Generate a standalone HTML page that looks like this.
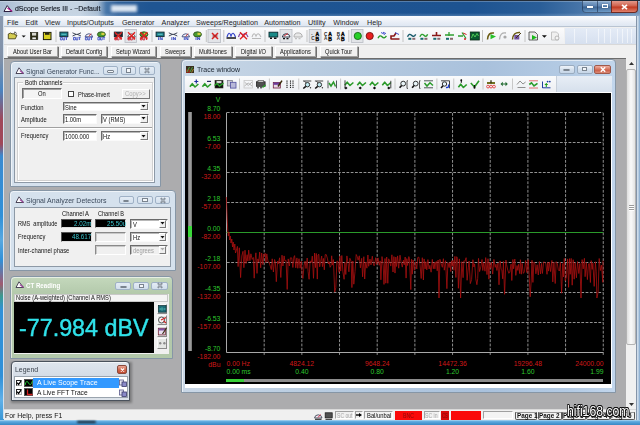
<!DOCTYPE html><html><head><meta charset="utf-8"><style>
html,body{margin:0;padding:0;}body{width:640px;height:425px;position:relative;overflow:hidden;background:#3a86c8;font-family:"Liberation Sans", sans-serif;}
div{box-sizing:border-box;}
</style></head><body>
<div style="position:absolute;left:0px;top:0px;width:640px;height:17px;background:linear-gradient(90deg,#a8bcd2 0px,#c4d2e0 30px,#c6d4e2 80px,#a9bdd2 98px,#4a78aa 106px,#2a5c96 118px,#1f5592 150px,#1d5391 470px,#2a5e98 540px,#5580b0 600px,#7898bc 640px);"></div>
<div style="position:absolute;left:0px;top:13px;width:640px;height:4px;background:linear-gradient(rgba(255,255,255,0),rgba(200,220,240,0.35));"></div>
<div style="position:absolute;left:0px;top:0px;width:640px;height:1px;background:#222c38;"></div>
<div style="position:absolute;left:0px;top:1px;width:640px;height:1px;background:rgba(255,255,255,0.25);"></div>
<div style="position:absolute;left:111px;top:5px;width:26px;height:7px;background:#dce6f2;filter:blur(1.5px);"></div>
<div style="position:absolute;left:15.20px;top:4.90px;font-size:7.6px;line-height:7.6px;color:#141a24;white-space:nowrap;transform:scaleX(0.9168);transform-origin:0 0;-webkit-text-stroke:0.15px #141a24;">dScope Series III - ~Default</div>
<div style="position:absolute;left:581.5px;top:1px;width:16.5px;height:11.5px;background:linear-gradient(rgba(200,220,240,0.45),rgba(120,150,190,0.35) 45%,rgba(30,60,100,0.35) 55%,rgba(140,190,230,0.4));border:1px solid rgba(30,50,80,0.6);border-top:none;border-radius:0 0 0 4px;"></div>
<div style="position:absolute;left:597.5px;top:1px;width:14px;height:11.5px;background:linear-gradient(rgba(200,220,240,0.45),rgba(120,150,190,0.35) 45%,rgba(30,60,100,0.35) 55%,rgba(140,190,230,0.4));border:1px solid rgba(30,50,80,0.6);border-top:none;border-left:none;"></div>
<div style="position:absolute;left:611px;top:1px;width:26.5px;height:11.5px;background:linear-gradient(#e39a8c,#d0614c 45%,#c03a22 55%,#e0806a);border:1px solid #6e2a22;border-top:none;border-radius:0 0 4px 0;"></div>
<div style="position:absolute;left:586.8px;top:6px;width:6px;height:2px;background:#fff;box-shadow:0 0 1px #223;"></div>
<div style="position:absolute;left:602px;top:4.2px;width:5.5px;height:4.3px;border:1px solid #fff;border-top-width:1.6px;box-shadow:0 0 1px #223;"></div>
<svg style="position:absolute;left:621px;top:3.5px" width="7" height="6" viewBox="0 0 7 6"><path d="M1 0.8 L6 5.2 M6 0.8 L1 5.2" stroke="#fff" stroke-width="1.6"/></svg>
<div style="position:absolute;left:0px;top:16px;width:4px;height:409px;background:linear-gradient(#8a9ab0 0px,#8090a8 44px,#4a84c0 74px,#a04858 104px,#a04858 128px,#3a8ad0 140px,#3090d8 200px,#58a8e0 224px,#3090d8 244px,#a05a70 268px,#3a9a90 280px,#3090d8 294px,#3090d8 360px,#60b0e8 384px,#3090d0 409px);"></div>
<div style="position:absolute;left:2.5px;top:16px;width:1px;height:403px;background:#d4e0ec;"></div>
<div style="position:absolute;left:3.5px;top:16px;width:0.8px;height:393px;background:#8494a8;"></div>
<div style="position:absolute;left:636px;top:16px;width:4px;height:409px;background:linear-gradient(90deg,#8494a8 0.8px,#d4e0ec 0.8px,#c9d8e8 2px,#7fa6cc);"></div>
<div style="position:absolute;left:4px;top:16px;width:632px;height:11px;background:linear-gradient(#fbfcfe,#e9eef6 60%,#dfe7f2);border-bottom:1px solid #b9c4d2;"></div>
<div style="position:absolute;left:7.00px;top:18.50px;font-size:7.2px;line-height:7.2px;color:#1e1e1e;white-space:nowrap;">File</div>
<div style="position:absolute;left:25.40px;top:18.50px;font-size:7.2px;line-height:7.2px;color:#1e1e1e;white-space:nowrap;">Edit</div>
<div style="position:absolute;left:44.70px;top:18.50px;font-size:7.2px;line-height:7.2px;color:#1e1e1e;white-space:nowrap;">View</div>
<div style="position:absolute;left:67.00px;top:18.50px;font-size:7.2px;line-height:7.2px;color:#1e1e1e;white-space:nowrap;">Inputs/Outputs</div>
<div style="position:absolute;left:122.00px;top:18.50px;font-size:7.2px;line-height:7.2px;color:#1e1e1e;white-space:nowrap;">Generator</div>
<div style="position:absolute;left:161.60px;top:18.50px;font-size:7.2px;line-height:7.2px;color:#1e1e1e;white-space:nowrap;">Analyzer</div>
<div style="position:absolute;left:196.00px;top:18.50px;font-size:7.2px;line-height:7.2px;color:#1e1e1e;white-space:nowrap;">Sweeps/Regulation</div>
<div style="position:absolute;left:264.20px;top:18.50px;font-size:7.2px;line-height:7.2px;color:#1e1e1e;white-space:nowrap;">Automation</div>
<div style="position:absolute;left:308.00px;top:18.50px;font-size:7.2px;line-height:7.2px;color:#1e1e1e;white-space:nowrap;">Utility</div>
<div style="position:absolute;left:333.20px;top:18.50px;font-size:7.2px;line-height:7.2px;color:#1e1e1e;white-space:nowrap;">Window</div>
<div style="position:absolute;left:367.00px;top:18.50px;font-size:7.2px;line-height:7.2px;color:#1e1e1e;white-space:nowrap;">Help</div>
<div style="position:absolute;left:4px;top:27px;width:632px;height:17px;background:#f0f0f0;"></div>
<div style="position:absolute;left:6px;top:28px;width:558px;height:16px;background:linear-gradient(#fbfbfc,#eef0f3);"></div>
<div style="position:absolute;left:565px;top:28px;width:71px;height:16px;background:linear-gradient(#e4ebf6,#d6e0ef);"></div>
<div style="position:absolute;left:574px;top:29px;width:0.8px;height:14px;background:rgba(255,255,255,0.55);"></div>
<div style="position:absolute;left:586px;top:29px;width:0.8px;height:14px;background:rgba(255,255,255,0.55);"></div>
<div style="position:absolute;left:598px;top:29px;width:0.8px;height:14px;background:rgba(255,255,255,0.55);"></div>
<div style="position:absolute;left:604px;top:29px;width:0.8px;height:14px;background:rgba(255,255,255,0.55);"></div>
<div style="position:absolute;left:610px;top:29px;width:0.8px;height:14px;background:rgba(255,255,255,0.55);"></div>
<div style="position:absolute;left:617px;top:29px;width:0.8px;height:14px;background:rgba(255,255,255,0.55);"></div>
<div style="position:absolute;left:622px;top:29px;width:0.8px;height:14px;background:rgba(255,255,255,0.55);"></div>
<div style="position:absolute;left:627px;top:29px;width:0.8px;height:14px;background:rgba(255,255,255,0.55);"></div>
<div style="position:absolute;left:631px;top:29px;width:0.8px;height:14px;background:rgba(255,255,255,0.55);"></div>
<div style="position:absolute;left:4px;top:44px;width:632px;height:14px;background:#f0f0f0;border-top:1px solid #d8d8d8;"></div>
<div style="position:absolute;left:7px;top:46.4px;width:50.5px;height:10.2px;background:#f0f0f0;border:1px solid;border-color:#fff #a0a0a0 #a0a0a0 #fff;box-shadow:0.8px 0.8px 0 #505050;"></div>
<div style="position:absolute;left:12.68px;top:49.05px;font-size:6.6px;line-height:6.6px;color:#111;white-space:nowrap;transform:scaleX(0.8650);transform-origin:0 0;">About User Bar</div>
<div style="position:absolute;left:61px;top:46.4px;width:45.5px;height:10.2px;background:#f0f0f0;border:1px solid;border-color:#fff #a0a0a0 #a0a0a0 #fff;box-shadow:0.8px 0.8px 0 #505050;"></div>
<div style="position:absolute;left:65.61px;top:49.05px;font-size:6.6px;line-height:6.6px;color:#111;white-space:nowrap;transform:scaleX(0.8650);transform-origin:0 0;">Default Config</div>
<div style="position:absolute;left:111px;top:46.4px;width:44.5px;height:10.2px;background:#f0f0f0;border:1px solid;border-color:#fff #a0a0a0 #a0a0a0 #fff;box-shadow:0.8px 0.8px 0 #505050;"></div>
<div style="position:absolute;left:116.07px;top:49.05px;font-size:6.6px;line-height:6.6px;color:#111;white-space:nowrap;transform:scaleX(0.8650);transform-origin:0 0;">Setup Wizard</div>
<div style="position:absolute;left:160px;top:46.4px;width:30.5px;height:10.2px;background:#f0f0f0;border:1px solid;border-color:#fff #a0a0a0 #a0a0a0 #fff;box-shadow:0.8px 0.8px 0 #505050;"></div>
<div style="position:absolute;left:165.04px;top:49.05px;font-size:6.6px;line-height:6.6px;color:#111;white-space:nowrap;transform:scaleX(0.8650);transform-origin:0 0;">Sweeps</div>
<div style="position:absolute;left:194px;top:46.4px;width:37.5px;height:10.2px;background:#f0f0f0;border:1px solid;border-color:#fff #a0a0a0 #a0a0a0 #fff;box-shadow:0.8px 0.8px 0 #505050;"></div>
<div style="position:absolute;left:198.74px;top:49.05px;font-size:6.6px;line-height:6.6px;color:#111;white-space:nowrap;transform:scaleX(0.8650);transform-origin:0 0;">Multi-tones</div>
<div style="position:absolute;left:235px;top:46.4px;width:37.10000000000002px;height:10.2px;background:#f0f0f0;border:1px solid;border-color:#fff #a0a0a0 #a0a0a0 #fff;box-shadow:0.8px 0.8px 0 #505050;"></div>
<div style="position:absolute;left:240.97px;top:49.05px;font-size:6.6px;line-height:6.6px;color:#111;white-space:nowrap;transform:scaleX(0.8650);transform-origin:0 0;">Digital I/O</div>
<div style="position:absolute;left:274.7px;top:46.4px;width:41.30000000000001px;height:10.2px;background:#f0f0f0;border:1px solid;border-color:#fff #a0a0a0 #a0a0a0 #fff;box-shadow:0.8px 0.8px 0 #505050;"></div>
<div style="position:absolute;left:279.91px;top:49.05px;font-size:6.6px;line-height:6.6px;color:#111;white-space:nowrap;transform:scaleX(0.8650);transform-origin:0 0;">Applications</div>
<div style="position:absolute;left:319.7px;top:46.4px;width:38.30000000000001px;height:10.2px;background:#f0f0f0;border:1px solid;border-color:#fff #a0a0a0 #a0a0a0 #fff;box-shadow:0.8px 0.8px 0 #505050;"></div>
<div style="position:absolute;left:325.21px;top:49.05px;font-size:6.6px;line-height:6.6px;color:#111;white-space:nowrap;transform:scaleX(0.8650);transform-origin:0 0;">Quick Tour</div>
<div style="position:absolute;left:4px;top:58px;width:632px;height:351px;background:#acacae;border-top:1px solid #6d6d6d;"></div>
<div style="position:absolute;left:626px;top:58px;width:10px;height:351px;background:#f0f0f0;"></div>
<div style="position:absolute;left:626px;top:69px;width:10px;height:276px;background:linear-gradient(90deg,#dedede,#fafafa 50%,#e2e2e2);border:1px solid #b3b3b3;border-radius:2px;"></div>
<div style="position:absolute;left:629px;top:204.5px;width:4.5px;height:1px;background:#9a9a9a;box-shadow:0 1px 0 #fff;"></div>
<div style="position:absolute;left:629px;top:206.5px;width:4.5px;height:1px;background:#9a9a9a;box-shadow:0 1px 0 #fff;"></div>
<div style="position:absolute;left:629px;top:208.5px;width:4.5px;height:1px;background:#9a9a9a;box-shadow:0 1px 0 #fff;"></div>
<svg style="position:absolute;left:629px;top:62px" width="5" height="3" viewBox="0 0 5 3"><path d="M0 3 L5 3 L2.5 0 Z" fill="#333"/></svg>
<svg style="position:absolute;left:629px;top:402.5px" width="5" height="3" viewBox="0 0 5 3"><path d="M0 0 L5 0 L2.5 3 Z" fill="#333"/></svg>
<div style="position:absolute;left:4px;top:409px;width:632px;height:11px;background:#f0f0f0;border-top:1px solid #d9d9d9;"></div>
<div style="position:absolute;left:4.60px;top:412.00px;font-size:7.2px;line-height:7.2px;color:#111;white-space:nowrap;transform:scaleX(0.9628);transform-origin:0 0;">For Help, press F1</div>
<div style="position:absolute;left:0px;top:419.6px;width:640px;height:5.4px;background:linear-gradient(#b0d8f2,#62ace0 1.5px,#4a9ad4 3px,#3a88c4);"></div>
<div style="position:absolute;left:77px;top:421px;width:19px;height:2px;background:#101820;filter:blur(0.8px);border-radius:1px;"></div>
<svg style="position:absolute;left:314px;top:411.5px" width="20" height="8" viewBox="0 0 20 8"><path d="M0.5 6 A3.8 3.8 0 0 1 8 6 Z" fill="#f0e8f0" stroke="#404858" stroke-width="0.9"/><path d="M4 5.5 L6.5 2.5" stroke="#d02040" stroke-width="0.9"/><path d="M1 7.3 h6.5" stroke="#202020" stroke-width="1"/><rect x="11.2" y="0.8" width="7" height="5" fill="#505050" stroke="#202020" stroke-width="0.8"/><path d="M11.5 7.3 h6.5" stroke="#202020" stroke-width="1"/></svg>
<div style="position:absolute;left:334.6px;top:411px;width:19px;height:8.4px;border:1px solid;border-color:#a0a0a0 #fff #fff #a0a0a0;"></div>
<div style="position:absolute;left:337.00px;top:412.75px;font-size:6.6px;line-height:6.6px;color:#a8a8a8;white-space:nowrap;transform:scaleX(0.7682);transform-origin:0 0;">SC out</div>
<div style="position:absolute;left:355px;top:411px;width:7.5px;height:8.4px;border:1px solid;border-color:#a0a0a0 #fff #fff #a0a0a0;"></div>
<svg style="position:absolute;left:356px;top:413.3px" width="6" height="4" viewBox="0 0 6 4"><path d="M0 2 H3.5" stroke="#000" stroke-width="1.4"/><path d="M3 0 L6 2 L3 4 Z" fill="#000"/></svg>
<div style="position:absolute;left:363.9px;top:411px;width:29.5px;height:8.4px;border:1px solid;border-color:#a0a0a0 #fff #fff #a0a0a0;"></div>
<div style="position:absolute;left:366.90px;top:412.75px;font-size:6.6px;line-height:6.6px;color:#111;white-space:nowrap;transform:scaleX(0.8829);transform-origin:0 0;">Bal/unbal</div>
<div style="position:absolute;left:395px;top:411.4px;width:27.2px;height:8.4px;background:#fa0a0a;"></div>
<div style="position:absolute;left:403.10px;top:412.85px;font-size:6.6px;line-height:6.6px;color:#8a0a0a;white-space:nowrap;transform:scaleX(0.7894);transform-origin:0 0;">BNC</div>
<div style="position:absolute;left:423.7px;top:411px;width:16.4px;height:8.4px;border:1px solid;border-color:#a0a0a0 #fff #fff #a0a0a0;"></div>
<div style="position:absolute;left:425.20px;top:412.75px;font-size:6.6px;line-height:6.6px;color:#a8a8a8;white-space:nowrap;transform:scaleX(0.7745);transform-origin:0 0;">SC in</div>
<div style="position:absolute;left:441.1px;top:411.4px;width:8px;height:8.4px;background:#d80c0c;"></div>
<div style="position:absolute;left:442.10px;top:412.85px;font-size:6.6px;line-height:6.6px;color:#7a0a0a;white-space:nowrap;transform:scaleX(0.6544);transform-origin:0 0;">CS</div>
<div style="position:absolute;left:450.9px;top:411.4px;width:30.4px;height:8.4px;background:#fa0a0a;"></div>
<div style="position:absolute;left:482.8px;top:411px;width:30.5px;height:8.4px;border:1px solid;border-color:#a0a0a0 #fff #fff #a0a0a0;background:#f4f4f4;"></div>
<div style="position:absolute;left:515.3px;top:412.2px;width:22.200000000000045px;height:7.4px;background:#f2f2f2;border:1px solid #555;border-top-color:#999;border-radius:0 0 2px 2px;"></div>
<div style="position:absolute;left:516.70px;top:413.35px;font-size:6.8px;line-height:6.8px;color:#111;white-space:nowrap;font-weight:bold;transform:scaleX(0.9350);transform-origin:0 0;">Page 1</div>
<div style="position:absolute;left:537.5px;top:412.2px;width:24.200000000000045px;height:7.4px;background:#f2f2f2;border:1px solid #555;border-top-color:#999;border-radius:0 0 2px 2px;"></div>
<div style="position:absolute;left:538.90px;top:413.35px;font-size:6.8px;line-height:6.8px;color:#111;white-space:nowrap;font-weight:bold;transform:scaleX(0.9350);transform-origin:0 0;">Page 2</div>
<div style="position:absolute;left:561.7px;top:412.2px;width:24.299999999999955px;height:7.4px;background:#f2f2f2;border:1px solid #555;border-top-color:#999;border-radius:0 0 2px 2px;"></div>
<div style="position:absolute;left:563.10px;top:413.35px;font-size:6.8px;line-height:6.8px;color:#111;white-space:nowrap;font-weight:bold;transform:scaleX(0.9350);transform-origin:0 0;">Page 3</div>
<div style="position:absolute;left:586px;top:412.2px;width:24px;height:7.4px;background:#f2f2f2;border:1px solid #555;border-top-color:#999;border-radius:0 0 2px 2px;"></div>
<div style="position:absolute;left:587.40px;top:413.35px;font-size:6.8px;line-height:6.8px;color:#111;white-space:nowrap;font-weight:bold;transform:scaleX(0.9350);transform-origin:0 0;">Page 4</div>
<div style="position:absolute;left:610px;top:412.2px;width:25px;height:7.4px;background:#f2f2f2;border:1px solid #555;border-top-color:#999;border-radius:0 0 2px 2px;"></div>
<div style="position:absolute;left:611.40px;top:413.35px;font-size:6.8px;line-height:6.8px;color:#111;white-space:nowrap;font-weight:bold;transform:scaleX(0.9350);transform-origin:0 0;">Page 5</div>
<div style="position:absolute;left:566.7px;top:404.3px;font-size:14px;line-height:14px;color:#fff;white-space:nowrap;transform:scaleX(0.8730);transform-origin:0 0;text-shadow:0.7px 0.7px 0 #111,-0.6px -0.6px 0 #111,0.6px -0.6px 0 #111,-0.6px 0.6px 0 #111,0 0.8px 0 #111,0.8px 0 0 #111,0 -0.8px 0 #111,-0.8px 0 0 #111;">hifi168.com</div>
<div style="position:absolute;left:10px;top:61.2px;width:150.5px;height:126.3px;background:#d5e1ed;border:1px solid #8696a6;border-radius:4px 4px 0 0;box-shadow:inset 1px 1px 0 rgba(255,255,255,0.6);"></div>
<div style="position:absolute;left:26.30px;top:67.50px;font-size:7.6px;line-height:7.6px;color:#3c4a5c;white-space:nowrap;transform:scaleX(0.8901);transform-origin:0 0;">Signal Generator Func...</div>
<svg style="position:absolute;left:15.3px;top:67.3px" width="9" height="7" viewBox="0 0 9 7"><path d="M1 6.5 L4 0.8 L8.5 6.5 Z" fill="#fff" stroke="#3a3448" stroke-width="0.9"/><path d="M4.8 3.6 L8.3 6.2" stroke="#9a3a9a" stroke-width="1.1"/></svg>
<div style="position:absolute;left:102.7px;top:66.3px;width:15.799999999999997px;height:8.700000000000003px;background:linear-gradient(#e4ecf5,#d2dfec);border:1px solid #9fb1c6;border-radius:2px;"></div>
<div style="position:absolute;left:107.39999999999999px;top:70.45px;width:6.4px;height:2.4px;border:0.8px solid #7a848f;background:#f4f7fa;border-radius:1px;"></div>
<div style="position:absolute;left:120.7px;top:66.3px;width:15.299999999999997px;height:8.700000000000003px;background:linear-gradient(#e4ecf5,#d2dfec);border:1px solid #9fb1c6;border-radius:2px;"></div>
<div style="position:absolute;left:125.75px;top:68.45px;width:5.2px;height:4.4px;border:0.8px solid #7a848f;border-top-width:1.6px;background:#f4f7fa;"></div>
<div style="position:absolute;left:138.8px;top:66.3px;width:15.799999999999983px;height:8.700000000000003px;background:linear-gradient(#e4ecf5,#d2dfec);border:1px solid #9fb1c6;border-radius:2px;"></div>
<svg style="position:absolute;left:142.7px;top:67.15px" width="8" height="7" viewBox="0 0 8 7"><path d="M1.8 1.2 L6.2 5.8 M6.2 1.2 L1.8 5.8" stroke="#7a848f" stroke-width="1.9"/><path d="M2.2 1.6 L5.8 5.4 M5.8 1.6 L2.2 5.4" stroke="#e8eef4" stroke-width="0.5"/></svg>
<div style="position:absolute;left:14px;top:77px;width:141px;height:106px;background:#f0f0f0;border:1px solid #8d99a6;"></div>
<div style="position:absolute;left:17px;top:82px;width:136px;height:99px;border:1px solid #d0d0d0;box-shadow:inset 1px 1px 0 #fff,1px 1px 0 #fff;"></div>
<div style="position:absolute;left:23px;top:79px;width:40px;height:7px;background:#f0f0f0;"></div>
<div style="position:absolute;left:24.90px;top:79.75px;font-size:6.6px;line-height:6.6px;color:#111;white-space:nowrap;transform:scaleX(0.8941);transform-origin:0 0;">Both channels</div>
<div style="position:absolute;left:22px;top:88px;width:40px;height:10.5px;background:#f4f4f4;border:1px solid;border-color:#6e6e6e #fff #fff #6e6e6e;box-shadow:inset 1px 1px 0 #a0a0a0;"></div>
<div style="position:absolute;left:38.03px;top:90.85px;font-size:6.6px;line-height:6.6px;color:#111;white-space:nowrap;transform:scaleX(0.8800);transform-origin:0 0;">On</div>
<div style="position:absolute;left:67.8px;top:91.1px;width:6.3px;height:6px;background:#fff;border:1px solid #444;"></div>
<div style="position:absolute;left:77.80px;top:91.55px;font-size:6.6px;line-height:6.6px;color:#111;white-space:nowrap;transform:scaleX(0.8609);transform-origin:0 0;">Phase-invert</div>
<div style="position:absolute;left:121.6px;top:88.5px;width:28.9px;height:10px;background:#efefef;border:1px solid;border-color:#fff #777 #777 #fff;"></div>
<div style="position:absolute;left:125.30px;top:91.45px;font-size:6.6px;line-height:6.6px;color:#b0b0b0;white-space:nowrap;transform:scaleX(0.8955);transform-origin:0 0;">Copy&gt;&gt;</div>
<div style="position:absolute;left:21.40px;top:104.65px;font-size:6.6px;line-height:6.6px;color:#111;white-space:nowrap;transform:scaleX(0.8928);transform-origin:0 0;">Function</div>
<div style="position:absolute;left:21.40px;top:116.85px;font-size:6.6px;line-height:6.6px;color:#111;white-space:nowrap;transform:scaleX(0.8800);transform-origin:0 0;">Amplitude</div>
<div style="position:absolute;left:21.40px;top:133.45px;font-size:6.6px;line-height:6.6px;color:#111;white-space:nowrap;transform:scaleX(0.8800);transform-origin:0 0;">Frequency</div>
<div style="position:absolute;left:62.5px;top:101.6px;width:86.30000000000001px;height:9.800000000000011px;background:#fff;border:1px solid;border-color:#6a6a6a #fafafa #fafafa #6a6a6a;box-shadow:inset 1px 1px 0 #b8b8b8;"></div>
<div style="position:absolute;left:140.3px;top:102.8px;width:7.3px;height:7.400000000000011px;background:#efefef;border:1px solid;border-color:#fff #7a7a7a #7a7a7a #fff;"></div>
<svg style="position:absolute;left:141.3px;top:105.0px" width="5" height="3" viewBox="0 0 5 3"><path d="M0.5 0 L4.5 0 L2.5 2.5 Z" fill="#111"/></svg>
<div style="position:absolute;left:64.70px;top:104.55px;font-size:6.6px;line-height:6.6px;color:#111;white-space:nowrap;transform:scaleX(0.8800);transform-origin:0 0;">Sine</div>
<div style="position:absolute;left:62.5px;top:113.8px;width:34.7px;height:10.100000000000009px;background:#fff;border:1px solid;border-color:#6a6a6a #fafafa #fafafa #6a6a6a;box-shadow:inset 1px 1px 0 #b8b8b8;"></div>
<div style="position:absolute;left:64.70px;top:116.60px;font-size:6.6px;line-height:6.6px;color:#111;white-space:nowrap;transform:scaleX(0.8800);transform-origin:0 0;">1.00m</div>
<div style="position:absolute;left:101.1px;top:113.8px;width:47.70000000000002px;height:10.100000000000009px;background:#fff;border:1px solid;border-color:#6a6a6a #fafafa #fafafa #6a6a6a;box-shadow:inset 1px 1px 0 #b8b8b8;"></div>
<div style="position:absolute;left:140.3px;top:115.0px;width:7.3px;height:7.700000000000008px;background:#efefef;border:1px solid;border-color:#fff #7a7a7a #7a7a7a #fff;"></div>
<svg style="position:absolute;left:141.3px;top:117.35px" width="5" height="3" viewBox="0 0 5 3"><path d="M0.5 0 L4.5 0 L2.5 2.5 Z" fill="#111"/></svg>
<div style="position:absolute;left:103.30px;top:116.90px;font-size:6.6px;line-height:6.6px;color:#111;white-space:nowrap;transform:scaleX(0.8800);transform-origin:0 0;">V (RMS)</div>
<div style="position:absolute;left:18px;top:127px;width:134px;height:2px;border-top:1px solid #a0a0a0;border-bottom:1px solid #fff;"></div>
<div style="position:absolute;left:62.5px;top:131px;width:34.7px;height:10.099999999999994px;background:#fff;border:1px solid;border-color:#6a6a6a #fafafa #fafafa #6a6a6a;box-shadow:inset 1px 1px 0 #b8b8b8;"></div>
<div style="position:absolute;left:64.70px;top:133.80px;font-size:6.6px;line-height:6.6px;color:#111;white-space:nowrap;transform:scaleX(0.8800);transform-origin:0 0;">1000.000</div>
<div style="position:absolute;left:101.1px;top:131px;width:47.70000000000002px;height:10.099999999999994px;background:#fff;border:1px solid;border-color:#6a6a6a #fafafa #fafafa #6a6a6a;box-shadow:inset 1px 1px 0 #b8b8b8;"></div>
<div style="position:absolute;left:140.3px;top:132.2px;width:7.3px;height:7.699999999999994px;background:#efefef;border:1px solid;border-color:#fff #7a7a7a #7a7a7a #fff;"></div>
<svg style="position:absolute;left:141.3px;top:134.55px" width="5" height="3" viewBox="0 0 5 3"><path d="M0.5 0 L4.5 0 L2.5 2.5 Z" fill="#111"/></svg>
<div style="position:absolute;left:103.30px;top:134.10px;font-size:6.6px;line-height:6.6px;color:#111;white-space:nowrap;transform:scaleX(0.8800);transform-origin:0 0;">Hz</div>
<div style="position:absolute;left:9.2px;top:190.2px;width:167.3px;height:80.80000000000001px;background:#d5e1ed;border:1px solid #8696a6;border-radius:4px 4px 0 0;box-shadow:inset 1px 1px 0 rgba(255,255,255,0.6);"></div>
<div style="position:absolute;left:26.00px;top:196.50px;font-size:7.6px;line-height:7.6px;color:#3c4a5c;white-space:nowrap;transform:scaleX(0.9250);transform-origin:0 0;">Signal Analyzer Detectors</div>
<svg style="position:absolute;left:15px;top:196.3px" width="9" height="7" viewBox="0 0 9 7"><path d="M1 6.5 L4 0.8 L8.5 6.5 Z" fill="#fff" stroke="#3a3448" stroke-width="0.9"/><path d="M4.8 3.6 L8.3 6.2" stroke="#9a3a9a" stroke-width="1.1"/></svg>
<div style="position:absolute;left:118.6px;top:195.8px;width:15.400000000000006px;height:8.399999999999977px;background:linear-gradient(#e4ecf5,#d2dfec);border:1px solid #9fb1c6;border-radius:2px;"></div>
<div style="position:absolute;left:123.1px;top:199.8px;width:6.4px;height:2.4px;border:0.8px solid #7a848f;background:#f4f7fa;border-radius:1px;"></div>
<div style="position:absolute;left:137px;top:195.8px;width:16px;height:8.399999999999977px;background:linear-gradient(#e4ecf5,#d2dfec);border:1px solid #9fb1c6;border-radius:2px;"></div>
<div style="position:absolute;left:142.4px;top:197.8px;width:5.2px;height:4.4px;border:0.8px solid #7a848f;border-top-width:1.6px;background:#f4f7fa;"></div>
<div style="position:absolute;left:155.2px;top:195.8px;width:15.300000000000011px;height:8.399999999999977px;background:linear-gradient(#e4ecf5,#d2dfec);border:1px solid #9fb1c6;border-radius:2px;"></div>
<svg style="position:absolute;left:158.85px;top:196.5px" width="8" height="7" viewBox="0 0 8 7"><path d="M1.8 1.2 L6.2 5.8 M6.2 1.2 L1.8 5.8" stroke="#7a848f" stroke-width="1.9"/><path d="M2.2 1.6 L5.8 5.4 M5.8 1.6 L2.2 5.4" stroke="#e8eef4" stroke-width="0.5"/></svg>
<div style="position:absolute;left:14px;top:207px;width:157px;height:60px;background:#f0f0f0;border:1px solid #8d99a6;"></div>
<div style="position:absolute;left:62.00px;top:210.65px;font-size:6.6px;line-height:6.6px;color:#111;white-space:nowrap;transform:scaleX(0.8865);transform-origin:0 0;">Channel A</div>
<div style="position:absolute;left:98.00px;top:210.65px;font-size:6.6px;line-height:6.6px;color:#111;white-space:nowrap;transform:scaleX(0.8435);transform-origin:0 0;">Channel B</div>
<div style="position:absolute;left:17.60px;top:221.25px;font-size:6.6px;line-height:6.6px;color:#111;white-space:nowrap;transform:scaleX(0.8391);transform-origin:0 0;">RMS&nbsp; amplitude</div>
<div style="position:absolute;left:17.60px;top:234.25px;font-size:6.6px;line-height:6.6px;color:#111;white-space:nowrap;transform:scaleX(0.8800);transform-origin:0 0;">Frequency</div>
<div style="position:absolute;left:17.60px;top:247.85px;font-size:6.6px;line-height:6.6px;color:#111;white-space:nowrap;transform:scaleX(0.8810);transform-origin:0 0;">Inter-channel phase</div>
<div style="position:absolute;left:60.5px;top:219px;width:31.299999999999997px;height:9.300000000000011px;background:#000;border:1px solid;border-color:#555 #ddd #ddd #555;"></div>
<div style="position:absolute;left:61.0px;top:219.5px;width:30.299999999999997px;height:8.300000000000011px;overflow:hidden;"><div style="position:absolute;left:13.21px;top:1.50px;font-size:6.8px;line-height:6.8px;color:#3cc4cc;white-space:nowrap;transform:scaleX(0.92);transform-origin:0 0;">2.02m</div></div>
<div style="position:absolute;left:95.2px;top:219px;width:31.299999999999997px;height:9.300000000000011px;background:#000;border:1px solid;border-color:#555 #ddd #ddd #555;"></div>
<div style="position:absolute;left:95.7px;top:219.5px;width:30.299999999999997px;height:8.300000000000011px;overflow:hidden;"><div style="position:absolute;left:11.46px;top:1.50px;font-size:6.8px;line-height:6.8px;color:#3cc4cc;white-space:nowrap;transform:scaleX(0.92);transform-origin:0 0;">25.50u</div></div>
<div style="position:absolute;left:130.3px;top:218.6px;width:37.39999999999998px;height:10.400000000000006px;background:#fff;border:1px solid;border-color:#6a6a6a #fafafa #fafafa #6a6a6a;box-shadow:inset 1px 1px 0 #b8b8b8;"></div>
<div style="position:absolute;left:159.2px;top:219.79999999999998px;width:7.3px;height:8.000000000000005px;background:#efefef;border:1px solid;border-color:#fff #7a7a7a #7a7a7a #fff;"></div>
<svg style="position:absolute;left:160.2px;top:222.3px" width="5" height="3" viewBox="0 0 5 3"><path d="M0.5 0 L4.5 0 L2.5 2.5 Z" fill="#111"/></svg>
<div style="position:absolute;left:132.50px;top:221.85px;font-size:6.6px;line-height:6.6px;color:#111;white-space:nowrap;transform:scaleX(0.8800);transform-origin:0 0;">V</div>
<div style="position:absolute;left:60.5px;top:232px;width:31.299999999999997px;height:9.5px;background:#000;border:1px solid;border-color:#555 #ddd #ddd #555;"></div>
<div style="position:absolute;left:61.0px;top:232.5px;width:30.299999999999997px;height:8.5px;overflow:hidden;"><div style="position:absolute;left:11.46px;top:1.60px;font-size:6.8px;line-height:6.8px;color:#3cc4cc;white-space:nowrap;transform:scaleX(0.92);transform-origin:0 0;">48.617</div></div>
<div style="position:absolute;left:95.2px;top:232px;width:31.299999999999997px;height:10px;background:#f0f0f0;border:1px solid;border-color:#8a8a8a #fff #fff #8a8a8a;box-shadow:inset 1px 1px 0 #c8c8c8;"></div>
<div style="position:absolute;left:130.3px;top:232px;width:37.39999999999998px;height:10px;background:#fff;border:1px solid;border-color:#6a6a6a #fafafa #fafafa #6a6a6a;box-shadow:inset 1px 1px 0 #b8b8b8;"></div>
<div style="position:absolute;left:159.2px;top:233.2px;width:7.3px;height:7.6px;background:#efefef;border:1px solid;border-color:#fff #7a7a7a #7a7a7a #fff;"></div>
<svg style="position:absolute;left:160.2px;top:235.5px" width="5" height="3" viewBox="0 0 5 3"><path d="M0.5 0 L4.5 0 L2.5 2.5 Z" fill="#111"/></svg>
<div style="position:absolute;left:132.50px;top:235.05px;font-size:6.6px;line-height:6.6px;color:#111;white-space:nowrap;transform:scaleX(0.8800);transform-origin:0 0;">Hz</div>
<div style="position:absolute;left:95.2px;top:244.7px;width:31.299999999999997px;height:10.100000000000023px;background:#f0f0f0;border:1px solid;border-color:#8a8a8a #fff #fff #8a8a8a;box-shadow:inset 1px 1px 0 #c8c8c8;"></div>
<div style="position:absolute;left:130.3px;top:244.7px;width:37.39999999999998px;height:10.100000000000023px;background:#f0f0f0;border:1px solid;border-color:#6a6a6a #fafafa #fafafa #6a6a6a;box-shadow:inset 1px 1px 0 #b8b8b8;"></div>
<div style="position:absolute;left:159.2px;top:245.89999999999998px;width:7.3px;height:7.700000000000022px;background:#efefef;border:1px solid;border-color:#fff #7a7a7a #7a7a7a #fff;"></div>
<svg style="position:absolute;left:160.2px;top:248.25px" width="5" height="3" viewBox="0 0 5 3"><path d="M0.5 0 L4.5 0 L2.5 2.5 Z" fill="#aaa"/></svg>
<div style="position:absolute;left:132.50px;top:247.80px;font-size:6.6px;line-height:6.6px;color:#a0a0a0;white-space:nowrap;transform:scaleX(0.8800);transform-origin:0 0;">degrees</div>
<div style="position:absolute;left:9.6px;top:275.6px;width:163.20000000000002px;height:83.0px;background:linear-gradient(#c4d8bc,#b4caac 20%,#b2c8aa);border:1px solid #8696a6;border-radius:4px 4px 0 0;box-shadow:inset 1px 1px 0 rgba(255,255,255,0.6);"></div>
<div style="position:absolute;left:25.80px;top:281.50px;font-size:7.6px;line-height:7.6px;color:#ffffff;white-space:nowrap;font-weight:bold;transform:scaleX(0.8100);transform-origin:0 0;">CT Reading</div>
<svg style="position:absolute;left:14.8px;top:281.3px" width="9" height="7" viewBox="0 0 9 7"><path d="M1 6.5 L4 0.8 L8.5 6.5 Z" fill="#fff" stroke="#3a3448" stroke-width="0.9"/><path d="M4.8 3.6 L8.3 6.2" stroke="#9a3a9a" stroke-width="1.1"/></svg>
<div style="position:absolute;left:115.4px;top:281.6px;width:15.900000000000006px;height:8.399999999999977px;background:linear-gradient(#e4ecf5,#d2dfec);border:1px solid #9fb1c6;border-radius:2px;"></div>
<div style="position:absolute;left:120.15px;top:285.6px;width:6.4px;height:2.4px;border:0.8px solid #7a848f;background:#f4f7fa;border-radius:1px;"></div>
<div style="position:absolute;left:133.4px;top:281.6px;width:15.900000000000006px;height:8.399999999999977px;background:linear-gradient(#e4ecf5,#d2dfec);border:1px solid #9fb1c6;border-radius:2px;"></div>
<div style="position:absolute;left:138.75000000000003px;top:283.6px;width:5.2px;height:4.4px;border:0.8px solid #7a848f;border-top-width:1.6px;background:#f4f7fa;"></div>
<div style="position:absolute;left:151.4px;top:281.6px;width:16.19999999999999px;height:8.399999999999977px;background:linear-gradient(#e4ecf5,#d2dfec);border:1px solid #9fb1c6;border-radius:2px;"></div>
<svg style="position:absolute;left:155.5px;top:282.3px" width="8" height="7" viewBox="0 0 8 7"><path d="M1.8 1.2 L6.2 5.8 M6.2 1.2 L1.8 5.8" stroke="#7a848f" stroke-width="1.9"/><path d="M2.2 1.6 L5.8 5.4 M5.8 1.6 L2.2 5.4" stroke="#e8eef4" stroke-width="0.5"/></svg>
<div style="position:absolute;left:13.8px;top:293.7px;width:154.8px;height:60.3px;background:#f0f0f0;"></div>
<div style="position:absolute;left:13.8px;top:293.7px;width:154.2px;height:8.1px;background:#f4f4f4;border:1px solid #c8c8c8;"></div>
<div style="position:absolute;left:15.50px;top:295.15px;font-size:6.6px;line-height:6.6px;color:#111;white-space:nowrap;transform:scaleX(0.8710);transform-origin:0 0;">Noise (A-weighted) (Channel A RMS)</div>
<div style="position:absolute;left:13.8px;top:301.8px;width:140.3px;height:51.1px;background:#000;"></div>
<div style="position:absolute;left:18.80px;top:316.15px;font-size:24.1px;line-height:24.1px;color:#30e2ea;white-space:nowrap;transform:scaleX(0.9665);transform-origin:0 0;-webkit-text-stroke:0.45px #30e2ea;">-77.984 dBV</div>
<div style="position:absolute;left:156.7px;top:304.2px;width:10.8px;height:9.400000000000034px;background:#e4e6e4;border:1px solid;border-color:#fafafa #8a8a8a #8a8a8a #fafafa;"></div>
<div style="position:absolute;left:156.7px;top:314.8px;width:10.8px;height:10.0px;background:#e4e6e4;border:1px solid;border-color:#fafafa #8a8a8a #8a8a8a #fafafa;"></div>
<div style="position:absolute;left:156.7px;top:326.4px;width:10.8px;height:10.400000000000034px;background:#e4e6e4;border:1px solid;border-color:#fafafa #8a8a8a #8a8a8a #fafafa;"></div>
<div style="position:absolute;left:156.7px;top:338px;width:10.8px;height:10.800000000000011px;background:#e4e6e4;border:1px solid;border-color:#fafafa #8a8a8a #8a8a8a #fafafa;"></div>
<svg style="position:absolute;left:0;top:0" width="640" height="425" viewBox="0 0 640 425"><rect x="158.3" y="305.6" width="7.8" height="6.6" fill="#1a6a74" stroke="#0a2a30" stroke-width="0.7"/><path d="M159.5 309 h1.5 M162 307.5 v3 M163.5 309 h2" stroke="#8fe" stroke-width="0.6"/><circle cx="161.5" cy="320" r="3" fill="#f4f4f4" stroke="#303030" stroke-width="0.8"/><path d="M161 320 L166 317.5 M163.5 321 L166 323" stroke="#d02020" stroke-width="1.1"/><rect x="158.3" y="328.3" width="7" height="6.6" fill="#e8e0f0" stroke="#702030" stroke-width="0.8"/><rect x="158.5" y="328.5" width="6.6" height="2" fill="#8050a0"/><path d="M162.5 334 L166.5 328" stroke="#3a2a10" stroke-width="1.2"/><circle cx="160.2" cy="343.2" r="1.2" fill="#8a8a8a"/><circle cx="164.4" cy="343.2" r="1.2" fill="#8a8a8a"/></svg>
<div style="position:absolute;left:11.3px;top:362.4px;width:120.5px;height:40.3px;background:rgba(0,0,0,0.28);filter:blur(1px);"></div>
<div style="position:absolute;left:10.5px;top:361.4px;width:119.80000000000001px;height:40.10000000000002px;background:linear-gradient(#dfe6ee,#d4dce6 40%,#dde3ea);border:1px solid #4a525c;border-radius:4px 4px 0 0;box-shadow:inset 1px 1px 0 rgba(255,255,255,0.6);"></div>
<div style="position:absolute;left:14.80px;top:365.80px;font-size:7.6px;line-height:7.6px;color:#3a424c;white-space:nowrap;transform:scaleX(0.9148);transform-origin:0 0;">Legend</div>
<div style="position:absolute;left:117.4px;top:364.9px;width:9.4px;height:9.1px;background:linear-gradient(#eaa898,#d0684e 50%,#c24a30);border:1px solid #8a4a3c;border-radius:2px;"></div>
<svg style="position:absolute;left:119.8px;top:367.5px" width="5" height="4" viewBox="0 0 5 4"><path d="M0.8 0.5 L4.2 3.5 M4.2 0.5 L0.8 3.5" stroke="#fff" stroke-width="1.1"/></svg>
<div style="position:absolute;left:14px;top:376.4px;width:113.7px;height:21.2px;background:#fff;border:1px solid #9aa4ae;"></div>
<div style="position:absolute;left:33.2px;top:378px;width:85.4px;height:9.6px;background:#3399ff;"></div>
<div style="position:absolute;left:16.1px;top:379.5px;width:5.6px;height:6.3px;background:#fff;border:1px solid #222;border-right-color:#aaa;border-bottom-color:#aaa;"></div>
<svg style="position:absolute;left:16.1px;top:379.5px" width="6" height="6" viewBox="0 0 6 6"><path d="M1.2 2.8 L2.6 4.4 L5 1.2" stroke="#000" stroke-width="1.3" fill="none"/></svg>
<div style="position:absolute;left:23.8px;top:378.6px;width:9.5px;height:8.2px;background:#000;border:0.5px solid #555;"></div>
<svg style="position:absolute;left:23.8px;top:378.6px" width="10" height="8" viewBox="0 0 10 8"><path d="M1 6 Q2.5 0 4.5 4 T8.5 2" stroke="#20c030" stroke-width="1" fill="none"/></svg>
<div style="position:absolute;left:36.60px;top:379.00px;font-size:7.6px;line-height:7.6px;color:#fff;white-space:nowrap;transform:scaleX(0.9254);transform-origin:0 0;">A Live Scope Trace</div>
<svg style="position:absolute;left:119.3px;top:379.0px" width="8" height="8" viewBox="0 0 8 8"><rect x="0.5" y="1" width="4" height="5" fill="#e8e8f4" stroke="#5a5a8a" stroke-width="0.8"/><rect x="3" y="3" width="4.5" height="4.5" fill="#8a8ac8" stroke="#3a3a6a" stroke-width="0.8"/></svg>
<div style="position:absolute;left:16.1px;top:389.0px;width:5.6px;height:6.3px;background:#fff;border:1px solid #222;border-right-color:#aaa;border-bottom-color:#aaa;"></div>
<svg style="position:absolute;left:16.1px;top:389.0px" width="6" height="6" viewBox="0 0 6 6"><path d="M1.2 2.8 L2.6 4.4 L5 1.2" stroke="#000" stroke-width="1.3" fill="none"/></svg>
<div style="position:absolute;left:23.8px;top:388.1px;width:9.5px;height:8.2px;background:#000;border:0.5px solid #555;"></div>
<svg style="position:absolute;left:23.8px;top:388.1px" width="10" height="8" viewBox="0 0 10 8"><path d="M3.5 1.5 V6.5 H8.5" stroke="#d02020" stroke-width="1.3" fill="none"/></svg>
<div style="position:absolute;left:36.60px;top:388.50px;font-size:7.6px;line-height:7.6px;color:#111;white-space:nowrap;transform:scaleX(0.8783);transform-origin:0 0;">A Live FFT Trace</div>
<svg style="position:absolute;left:119.3px;top:388.5px" width="8" height="8" viewBox="0 0 8 8"><rect x="0.5" y="1" width="4" height="5" fill="#e8e8f4" stroke="#5a5a8a" stroke-width="0.8"/><rect x="3" y="3" width="4.5" height="4.5" fill="#8a8ac8" stroke="#3a3a6a" stroke-width="0.8"/></svg>
<div style="position:absolute;left:180.5px;top:59px;width:435.70000000000005px;height:333.6px;background:linear-gradient(90deg,#c9d7e6,#b9cce0 30%,#a9c1dc 70%,#b4cbe4 90%,#c2d6ec);border:1px solid #8696a6;border-radius:4px 4px 0 0;box-shadow:inset 1px 1px 0 rgba(255,255,255,0.6);"></div>
<div style="position:absolute;left:196.80px;top:65.80px;font-size:7.6px;line-height:7.6px;color:#1b2530;white-space:nowrap;transform:scaleX(0.9227);transform-origin:0 0;">Trace window</div>
<div style="position:absolute;left:558.5px;top:65px;width:16.299999999999955px;height:8.5px;background:linear-gradient(#eef3f9,#d4e0ed 50%,#c6d6e8);border:1px solid #9aacc0;border-radius:2px;"></div>
<div style="position:absolute;left:563.4499999999999px;top:69.05px;width:6.4px;height:2.4px;border:0.8px solid #7a848f;background:#f4f7fa;border-radius:1px;"></div>
<div style="position:absolute;left:576.5px;top:65px;width:16.0px;height:8.5px;background:linear-gradient(#eef3f9,#d4e0ed 50%,#c6d6e8);border:1px solid #9aacc0;border-radius:2px;"></div>
<div style="position:absolute;left:581.9px;top:67.05px;width:5.2px;height:4.4px;border:0.8px solid #7a848f;border-top-width:1.6px;background:#f4f7fa;"></div>
<div style="position:absolute;left:594px;top:65px;width:17px;height:8.5px;background:linear-gradient(#eeb0a2,#d4705a 50%,#c85a44 55%,#dc8a76);border:1px solid #a05a4c;border-radius:2px;"></div>
<svg style="position:absolute;left:598.5px;top:65.75px" width="8" height="7" viewBox="0 0 8 7"><path d="M1.8 1.2 L6.2 5.8 M6.2 1.2 L1.8 5.8" stroke="#fff" stroke-width="1.4"/></svg>
<div style="position:absolute;left:184.8px;top:75.6px;width:427.7px;height:312.6px;background:#fff;"></div>
<div style="position:absolute;left:184.8px;top:75.6px;width:371.5px;height:16.3px;background:linear-gradient(#fafbfc,#eceef2);"></div>
<div style="position:absolute;left:556.3px;top:75.6px;width:56.2px;height:16.3px;background:linear-gradient(#e8eef6,#d6e0ec);border-left:1px solid #c8d0da;"></div>
<div style="position:absolute;left:184.8px;top:92.6px;width:426px;height:291.9px;background:#000;"></div>
<svg style="position:absolute;left:0;top:0" width="640" height="100" viewBox="0 0 640 100"><path d="M189.9 86.7 L192.26 83.7 L195.02 87.0 L198.39999999999998 84.0" stroke="#2a9a2a" stroke-width="1.6" fill="none" stroke-linejoin="round"/><path d="M194.3 81.5 h4 M196.3 79.6 v3.8" stroke="#2030a0" stroke-width="1.2"/><path d="M202.4 86.7 L204.76 83.7 L207.52 87.0 L210.89999999999998 84.0" stroke="#2a9a2a" stroke-width="1.6" fill="none" stroke-linejoin="round"/><path d="M207 81.4 h4" stroke="#2a2a60" stroke-width="1.2"/><rect x="215" y="80.4" width="8" height="7.6" fill="#101010" stroke="#303020" stroke-width="0.6"/><rect x="216.5" y="81" width="5" height="2.3" fill="#d8d8d8"/><path d="M214.5 85.5 L217 83.5 L219.5 86 L223.5 83.2" stroke="#2aa02a" stroke-width="1.5" fill="none"/><rect x="227.3" y="80.5" width="5" height="5.5" fill="#d0d0d8" stroke="#707080" stroke-width="0.7"/><rect x="230.5" y="82.3" width="5.5" height="5.8" fill="#b8b8d8" stroke="#5050a0" stroke-width="0.8"/><line x1="239.5" y1="78.5" x2="239.5" y2="89.5" stroke="#c8c8c8" stroke-width="1"/><rect x="244" y="80.5" width="8.5" height="7.5" fill="none" stroke="#c8c8c8" stroke-width="0.8"/><path d="M244.5 82 L248.2 85.5 L252 82 M244.5 86 L248.2 83 L252 86" stroke="#b0b0b0" stroke-width="0.9" fill="none"/><rect x="256.5" y="81.8" width="8.6" height="4.5" fill="#505050" stroke="#202020" stroke-width="0.8"/><rect x="258" y="80.3" width="5.6" height="1.8" fill="#e8e8e8" stroke="#404040" stroke-width="0.6"/><path d="M257 87.8 h2 M260 87.8 h2" stroke="#222" stroke-width="1"/><path d="M262.5 87.5 L265.5 85" stroke="#2aa02a" stroke-width="1.3"/><line x1="269.4" y1="78.5" x2="269.4" y2="89.5" stroke="#c8c8c8" stroke-width="1"/><rect x="273.3" y="82.5" width="7" height="5.5" fill="#e8d8e8" stroke="#702040" stroke-width="0.8"/><rect x="273.5" y="82.6" width="6.6" height="2.2" fill="#6a3a9a"/><path d="M278 86.5 L282 80.6" stroke="#3a2a08" stroke-width="1.5"/><path d="M287 80.5 v7.5 M290.5 80.5 v7.5 M293 80.5 v7.5" stroke="#202020" stroke-width="1.1" stroke-dasharray="1.2 0.9"/><line x1="298.75" y1="78.5" x2="298.75" y2="89.5" stroke="#c8c8c8" stroke-width="1"/><path d="M303.0 81.0 h8.3 M304.5 81.2 L307.5 84.2" stroke="#303030" stroke-width="0.9"/><circle cx="307.5" cy="84.7" r="2.2" fill="#bfe8f0" stroke="#202020" stroke-width="0.9"/><path d="M305.8 86.4 L303.3 88.5" stroke="#101010" stroke-width="1.5"/><circle cx="310.5" cy="87.8" r="0.7" fill="#333"/><path d="M314.9 81.0 h8.3 M316.4 81.2 L319.4 84.2" stroke="#303030" stroke-width="0.9"/><circle cx="319.4" cy="84.7" r="2.2" fill="#bfe8f0" stroke="#202020" stroke-width="0.9"/><path d="M317.7 86.4 L315.2 88.5" stroke="#101010" stroke-width="1.5"/><circle cx="322.4" cy="87.8" r="0.7" fill="#333"/><path d="M328 80.5 v7.8 M336.5 80.5 v7.8" stroke="#404848" stroke-width="0.9"/><path d="M329 83 L331 86 L333.5 82 L335.5 86.5" stroke="#2a9a2a" stroke-width="1.5" fill="none"/><line x1="340.6" y1="78.5" x2="340.6" y2="89.5" stroke="#c8c8c8" stroke-width="1"/><path d="M344.79999999999995 85.2 L347.19 82.2 L349.97999999999996 85.5 L353.4 82.5" stroke="#2a9a2a" stroke-width="1.6" fill="none" stroke-linejoin="round"/><path d="M345.9 86.4 l1.6 1.6 l-1.6 1.6 l-1.6 -1.6 Z" fill="#101010"/><path d="M357.29999999999995 85.2 L359.69 82.2 L362.47999999999996 85.5 L365.9 82.5" stroke="#2a9a2a" stroke-width="1.6" fill="none" stroke-linejoin="round"/><path d="M360.2 86.4 l1.6 1.6 l-1.6 1.6 l-1.6 -1.6 Z" fill="#101010"/><path d="M369.79999999999995 85.2 L372.19 82.2 L374.97999999999996 85.5 L378.4 82.5" stroke="#2a9a2a" stroke-width="1.6" fill="none" stroke-linejoin="round"/><path d="M374.5 86.4 l1.6 1.6 l-1.6 1.6 l-1.6 -1.6 Z" fill="#101010"/><path d="M382.29999999999995 85.2 L384.69 82.2 L387.47999999999996 85.5 L390.9 82.5" stroke="#2a9a2a" stroke-width="1.6" fill="none" stroke-linejoin="round"/><path d="M388.79999999999995 86.4 l1.6 1.6 l-1.6 1.6 l-1.6 -1.6 Z" fill="#101010"/><path d="M345 80.3 v8" stroke="#303030" stroke-width="0.9"/><path d="M390.8 80.8 v7.5" stroke="#303030" stroke-width="0.9"/><line x1="395" y1="78.5" x2="395" y2="89.5" stroke="#c8c8c8" stroke-width="1"/><circle cx="403.2" cy="83.60000000000001" r="2.4" fill="#e8f4f8" stroke="#202020" stroke-width="0.9"/><path d="M401.59999999999997 85.4 L399.59999999999997 87.8" stroke="#101010" stroke-width="1.6"/><path d="M408.0 80.8 h-1 v7.6 h1" stroke="#303030" stroke-width="0.8" fill="none"/><circle cx="415.7" cy="83.60000000000001" r="2.4" fill="#e8f4f8" stroke="#202020" stroke-width="0.9"/><path d="M414.09999999999997 85.4 L412.09999999999997 87.8" stroke="#101010" stroke-width="1.6"/><path d="M420.5 80.8 h-1 v7.6 h1" stroke="#303030" stroke-width="0.8" fill="none"/><path d="M424 80.8 h9 M424 87.8 h9" stroke="#404848" stroke-width="0.9"/><path d="M424.5 83 L427 86 L430 82.8 L433 85.5" stroke="#2a9a2a" stroke-width="1.5" fill="none"/><line x1="436.9" y1="78.5" x2="436.9" y2="89.5" stroke="#c8c8c8" stroke-width="1"/><path d="M441 80.8 h8.5 v7.5" stroke="#303030" stroke-width="0.9" fill="none"/><circle cx="444.5" cy="84" r="2.2" fill="#e8f4f8" stroke="#202020" stroke-width="0.9"/><path d="M443 85.8 L441 88" stroke="#101010" stroke-width="1.5"/><path d="M446 87.5 Q449.5 88 448.5 84.5" stroke="#2040d0" stroke-width="1.4" fill="none"/><line x1="453.75" y1="78.5" x2="453.75" y2="89.5" stroke="#c8c8c8" stroke-width="1"/><path d="M458.4 87.2 L460.7 84.2 L463.4 87.5 L466.7 84.5" stroke="#2a9a2a" stroke-width="1.6" fill="none" stroke-linejoin="round"/><path d="M461.3 79.7 v3" stroke="#101010" stroke-width="1.1"/><circle cx="461.3" cy="80.2" r="0.9" fill="#111"/><path d="M470.8 83 L474.5 87 L479 80.8" stroke="#2a9a2a" stroke-width="1.6" fill="none"/><path d="M474.5 85 v2.5" stroke="#101010" stroke-width="1.2"/><circle cx="474.5" cy="87.8" r="1" fill="#111"/><line x1="483" y1="78.5" x2="483" y2="89.5" stroke="#c8c8c8" stroke-width="1"/><path d="M487 83 h8" stroke="#707020" stroke-width="2"/><path d="M491 80.3 v3" stroke="#303010" stroke-width="1.3"/><circle cx="488" cy="86.6" r="1.4" fill="none" stroke="#e03030" stroke-width="0.8"/><circle cx="491" cy="86.6" r="1.4" fill="none" stroke="#e03030" stroke-width="0.8"/><circle cx="494" cy="86.6" r="1.4" fill="none" stroke="#e03030" stroke-width="0.8"/><path d="M500.5 84 L502.8 81.8 L502.8 86.2 Z M507.8 84 L505.5 81.8 L505.5 86.2 Z" fill="#206a30"/><path d="M502.5 84 h3.5" stroke="#206a30" stroke-width="1"/><line x1="512.5" y1="78.5" x2="512.5" y2="89.5" stroke="#c8c8c8" stroke-width="1"/><path d="M517 84.5 L520 81 L523 84 L525.6 82 M517.5 87.5 h8" stroke="#909090" stroke-width="1" fill="none"/><path d="M529 80.8 h9 M529 88 h9" stroke="#e06060" stroke-width="0.9"/><path d="M529.3 84.5 L531.5 82.8 L534 86 L537.5 83.3" stroke="#2a9a2a" stroke-width="1.6" fill="none"/><path d="M542.5 87.8 h8 M542.5 81.5 v6.5" stroke="#2040a0" stroke-width="1"/><path d="M544.8 84.5 h3 M546.3 83 v4" stroke="#20a020" stroke-width="1.1"/><circle cx="547.6" cy="81.6" r="0.9" fill="#2040a0"/><circle cx="549.8" cy="81.6" r="0.9" fill="#2040a0"/></svg>
<svg style="position:absolute;left:186.2px;top:65.8px" width="8" height="7" viewBox="0 0 8 7"><rect x="0" y="0" width="8" height="7" fill="#3a3020"/><rect x="0" y="3.5" width="4" height="3.5" fill="#8a2818"/><path d="M1 6 L3.5 1 M4 6 L6.5 1" stroke="#50a040" stroke-width="1"/><path d="M5.5 6.5 L7.5 3" stroke="#c0a030" stroke-width="0.8"/></svg>
<svg style="position:absolute;left:0;top:0" width="640" height="425" viewBox="0 0 640 425"><line x1="226.5" y1="112.5" x2="226.5" y2="352.5" stroke="#a8a8a8" stroke-width="1"/><line x1="264.175" y1="112.5" x2="264.175" y2="355.5" stroke="#8e8e8e" stroke-width="1" stroke-dasharray="2.8 1.47" stroke-dashoffset="-0.5"/><line x1="301.85" y1="112.5" x2="301.85" y2="355.5" stroke="#8e8e8e" stroke-width="1" stroke-dasharray="2.8 1.47" stroke-dashoffset="-0.5"/><line x1="339.525" y1="112.5" x2="339.525" y2="355.5" stroke="#8e8e8e" stroke-width="1" stroke-dasharray="2.8 1.47" stroke-dashoffset="-0.5"/><line x1="377.2" y1="112.5" x2="377.2" y2="355.5" stroke="#8e8e8e" stroke-width="1" stroke-dasharray="2.8 1.47" stroke-dashoffset="-0.5"/><line x1="414.875" y1="112.5" x2="414.875" y2="355.5" stroke="#8e8e8e" stroke-width="1" stroke-dasharray="2.8 1.47" stroke-dashoffset="-0.5"/><line x1="452.54999999999995" y1="112.5" x2="452.54999999999995" y2="355.5" stroke="#8e8e8e" stroke-width="1" stroke-dasharray="2.8 1.47" stroke-dashoffset="-0.5"/><line x1="490.22499999999997" y1="112.5" x2="490.22499999999997" y2="355.5" stroke="#8e8e8e" stroke-width="1" stroke-dasharray="2.8 1.47" stroke-dashoffset="-0.5"/><line x1="527.9" y1="112.5" x2="527.9" y2="355.5" stroke="#8e8e8e" stroke-width="1" stroke-dasharray="2.8 1.47" stroke-dashoffset="-0.5"/><line x1="565.575" y1="112.5" x2="565.575" y2="355.5" stroke="#8e8e8e" stroke-width="1" stroke-dasharray="2.8 1.47" stroke-dashoffset="-0.5"/><line x1="603.25" y1="112.5" x2="603.25" y2="355.5" stroke="#8e8e8e" stroke-width="1" stroke-dasharray="2.8 1.47" stroke-dashoffset="-0.5"/><line x1="226.5" y1="112.5" x2="603.25" y2="112.5" stroke="#939393" stroke-width="1" stroke-dasharray="2.8 1.47" stroke-dashoffset="-0.4"/><line x1="226.5" y1="142.5" x2="603.25" y2="142.5" stroke="#939393" stroke-width="1" stroke-dasharray="2.8 1.47" stroke-dashoffset="-0.4"/><line x1="226.5" y1="172.5" x2="603.25" y2="172.5" stroke="#939393" stroke-width="1" stroke-dasharray="2.8 1.47" stroke-dashoffset="-0.4"/><line x1="226.5" y1="202.5" x2="603.25" y2="202.5" stroke="#939393" stroke-width="1" stroke-dasharray="2.8 1.47" stroke-dashoffset="-0.4"/><line x1="226.5" y1="232.5" x2="603.25" y2="232.5" stroke="#939393" stroke-width="1" stroke-dasharray="2.8 1.47" stroke-dashoffset="-0.4"/><line x1="226.5" y1="262.5" x2="603.25" y2="262.5" stroke="#939393" stroke-width="1" stroke-dasharray="2.8 1.47" stroke-dashoffset="-0.4"/><line x1="226.5" y1="292.5" x2="603.25" y2="292.5" stroke="#939393" stroke-width="1" stroke-dasharray="2.8 1.47" stroke-dashoffset="-0.4"/><line x1="226.5" y1="322.5" x2="603.25" y2="322.5" stroke="#939393" stroke-width="1" stroke-dasharray="2.8 1.47" stroke-dashoffset="-0.4"/><line x1="226.5" y1="352.5" x2="603.25" y2="352.5" stroke="#a8a8a8" stroke-width="1"/><line x1="226.5" y1="232.5" x2="603.25" y2="232.5" stroke="#2a9a2a" stroke-width="1"/><polyline fill="none" stroke="#aa1010" stroke-width="0.8" points="226.3,197 226.7,206 227.2,218 227.7,229 228.3,236 229,232 229.6,240 230.3,236 231,243 231.8,239 232.5,247 233.2,242 234,250 234.8,244 235.5,253 236.4,250.2 237.4,246.4 238.1,266.6 239.3,247.8 240.6,277.6 241.8,256.0 243.0,251.3 243.9,267.7 245.0,250.2 246.0,263.5 247.1,254.7 247.9,261.0 248.7,250.1 249.9,260.7 250.9,253.8 252.2,259.4 253.3,257.5 254.2,278.2 255.0,260.5 255.9,252.8 257.0,273.4 257.9,258.9 258.7,262.1 259.7,252.1 260.7,267.8 261.7,253.0 262.9,264.6 263.7,254.0 264.5,255.4 265.2,253.3 265.9,262.5 266.8,253.9 268.1,262.0 269.0,262.2 270.3,266.2 271.3,269.6 272.2,258.8 273.4,272.0 274.6,259.5 275.4,262.3 276.3,281.7 277.6,261.0 278.4,263.7 279.6,257.8 280.8,277.5 282.0,255.2 282.9,266.0 284.1,255.9 284.9,260.9 286.1,260.5 287.2,289.4 288.2,258.9 289.4,266.0 290.4,257.8 291.7,257.9 292.9,267.5 293.9,257.0 294.6,255.6 295.8,267.8 296.9,257.9 297.8,268.3 299.0,258.7 300.1,268.2 301.3,261.2 302.2,275.7 302.9,278.4 304.1,265.1 305.1,261.1 306.0,268.5 307.2,258.0 308.1,271.6 309.1,279.3 310.1,260.8 311.4,262.4 312.3,256.1 313.5,278.3 314.6,253.0 315.5,267.6 316.3,253.5 317.3,279.1 318.0,255.0 318.8,254.2 319.7,266.8 320.6,261.7 321.7,256.0 322.4,266.7 323.4,258.4 324.3,269.8 325.2,254.6 326.3,254.7 327.5,258.9 328.4,264.0 329.2,261.7 330.1,267.3 331.0,265.8 331.7,255.8 332.4,265.1 333.4,259.6 334.7,292.1 335.8,287.7 336.9,261.2 337.9,261.3 339.1,272.3 339.9,255.9 340.7,271.1 341.8,255.5 342.9,271.8 344.1,279.3 344.9,262.4 345.8,274.5 346.9,255.9 348.1,263.7 348.9,271.8 349.9,258.3 351.2,261.5 351.9,287.6 352.8,261.0 353.8,284.2 355.0,271.7 356.2,254.5 357.2,256.5 358.1,260.2 359.3,255.8 360.4,267.9 361.7,258.3 362.6,276.8 363.8,256.7 364.7,279.0 365.7,262.0 366.9,268.2 367.9,255.0 368.7,266.3 370.0,259.1 371.0,264.9 372.3,256.2 373.6,265.4 374.5,265.5 375.7,257.7 376.7,264.4 378.0,257.9 379.2,265.3 380.2,260.9 380.9,279.8 382.0,256.6 383.2,265.9 384.0,284.4 385.0,258.5 385.8,283.2 386.7,257.0 387.8,283.3 388.7,258.8 389.6,261.4 390.8,266.1 391.9,254.8 393.0,272.0 393.9,256.6 395.0,273.1 395.8,257.1 396.6,266.5 397.6,255.9 398.7,268.2 400.0,255.2 401.0,261.7 402.3,267.1 403.4,260.2 404.3,264.8 405.2,257.0 406.1,278.1 406.8,258.6 407.6,265.5 408.8,256.6 409.5,258.7 410.8,289.6 411.6,259.2 412.3,274.2 413.1,260.1 414.3,270.3 415.6,261.8 416.8,269.0 417.7,257.6 418.8,257.1 419.9,263.2 421.2,278.5 422.3,257.7 423.4,280.0 424.1,258.9 425.1,268.9 425.9,261.7 426.8,269.9 427.9,259.6 429.1,269.0 429.9,265.3 431.1,272.2 432.3,259.4 433.3,268.8 434.2,262.6 434.9,268.9 435.7,261.9 436.5,261.6 437.2,270.8 438.1,260.0 439.0,298 439.9,259.3 441.1,263.4 442.3,267.3 443.4,258.7 444.3,270.2 445.6,260.7 446.9,288.7 447.9,262.7 449.1,267.6 449.9,262.3 450.8,271.5 451.5,260.8 452.2,266.1 453.0,260.1 453.9,270.3 454.9,256.4 455.9,277.5 456.7,256.7 457.6,258.6 458.4,288.3 459.4,258.9 460.6,298 461.8,261.7 463.1,277.7 463.8,260.9 465.1,261.1 466.1,257.7 467.1,280.3 468.3,267.8 469.1,261.0 470.3,283.6 471.6,279.6 472.9,259.7 473.9,267.0 474.7,263.8 475.8,278.9 476.9,284.7 477.7,278.7 478.5,258.4 479.6,271.6 480.8,267.0 482.0,259.5 482.8,270.5 483.7,262.8 485.0,271.2 485.7,257.6 487.0,274.6 488.0,258.7 488.9,279.2 489.6,262.6 490.8,268.3 491.5,262.4 492.7,274.1 493.9,259.4 495.2,267.4 496.0,264.2 496.9,270.5 498.0,263.0 499.0,284.8 500.1,260.9 501.2,269.5 501.9,270.1 502.7,278.8 503.4,261.4 504.6,294.3 505.9,260.0 506.6,264.7 507.8,270.2 508.9,273.3 509.8,272.2 511.1,264.1 511.8,280.5 512.9,259.5 513.6,268.8 514.8,259.1 515.8,275.4 517.0,265.5 517.8,270.4 518.6,264.3 519.7,273.6 520.4,259.7 521.3,274.2 522.1,263.4 523.3,273.4 524.5,271.7 525.6,260.6 526.9,272.6 528.1,259.7 529.0,272.3 530.2,296.8 531.2,281.0 532.0,260.3 532.9,282.4 533.9,262.1 535.0,263.9 535.9,273.8 537.1,264.7 538.3,275.0 539.4,261.6 540.5,274.0 541.6,263.4 542.4,273.5 543.7,261.9 544.8,262.4 545.9,263.8 547.0,274.3 547.8,262.2 548.6,271.1 549.5,262.1 550.6,271.6 551.9,260.4 552.8,281.9 553.9,262.3 555.2,283.5 556.2,261.7 557.4,263.7 558.3,269.9 559.4,271.0 560.4,262.2 561.6,293.2 562.8,263.5 563.5,277.0 564.3,258.4 565.2,280.7 566.4,277.1 567.6,258.9 568.6,287.3 569.5,258.6 570.2,274.3 571.2,258.4 572.2,285.2 573.2,259.7 574.2,279.2 575.1,262.7 576.4,277.8 577.6,261.6 578.8,273.5 579.9,263.5 581.0,298 582.1,259.6 583.2,268.9 584.4,258.3 585.1,276.7 586.3,262.6 587.4,279.6 588.5,263.9 589.3,263.4 590.4,282.5 591.2,260.6 592.2,269.4 592.9,263.2 594.2,286.4 595.4,261.8 596.2,271.2 596.9,298 598.1,292.2 599.2,258.5 600.4,270.5 601.5,265.2 602.8,282.3 603,260.6"/></svg>
<div style="font-size:6.8px;line-height:7px;white-space:nowrap;position:absolute;right:419.6px;top:104.7px;color:#2ec82e;">8.70</div>
<div style="font-size:6.8px;line-height:7px;white-space:nowrap;position:absolute;right:419.6px;top:112.7px;color:#d01818;">18.00</div>
<div style="font-size:6.8px;line-height:7px;white-space:nowrap;position:absolute;right:419.6px;top:134.7px;color:#2ec82e;">6.53</div>
<div style="font-size:6.8px;line-height:7px;white-space:nowrap;position:absolute;right:419.6px;top:142.7px;color:#d01818;">-7.00</div>
<div style="font-size:6.8px;line-height:7px;white-space:nowrap;position:absolute;right:419.6px;top:164.7px;color:#2ec82e;">4.35</div>
<div style="font-size:6.8px;line-height:7px;white-space:nowrap;position:absolute;right:419.6px;top:172.7px;color:#d01818;">-32.00</div>
<div style="font-size:6.8px;line-height:7px;white-space:nowrap;position:absolute;right:419.6px;top:194.7px;color:#2ec82e;">2.18</div>
<div style="font-size:6.8px;line-height:7px;white-space:nowrap;position:absolute;right:419.6px;top:202.7px;color:#d01818;">-57.00</div>
<div style="font-size:6.8px;line-height:7px;white-space:nowrap;position:absolute;right:419.6px;top:224.7px;color:#2ec82e;">0.00</div>
<div style="font-size:6.8px;line-height:7px;white-space:nowrap;position:absolute;right:419.6px;top:232.7px;color:#d01818;">-82.00</div>
<div style="font-size:6.8px;line-height:7px;white-space:nowrap;position:absolute;right:419.6px;top:254.7px;color:#2ec82e;">-2.18</div>
<div style="font-size:6.8px;line-height:7px;white-space:nowrap;position:absolute;right:419.6px;top:262.7px;color:#d01818;">-107.00</div>
<div style="font-size:6.8px;line-height:7px;white-space:nowrap;position:absolute;right:419.6px;top:284.7px;color:#2ec82e;">-4.35</div>
<div style="font-size:6.8px;line-height:7px;white-space:nowrap;position:absolute;right:419.6px;top:292.7px;color:#d01818;">-132.00</div>
<div style="font-size:6.8px;line-height:7px;white-space:nowrap;position:absolute;right:419.6px;top:314.7px;color:#2ec82e;">-6.53</div>
<div style="font-size:6.8px;line-height:7px;white-space:nowrap;position:absolute;right:419.6px;top:322.7px;color:#d01818;">-157.00</div>
<div style="font-size:6.8px;line-height:7px;white-space:nowrap;position:absolute;right:419.6px;top:344.7px;color:#2ec82e;">-8.70</div>
<div style="font-size:6.8px;line-height:7px;white-space:nowrap;position:absolute;right:419.6px;top:352.7px;color:#d01818;">-182.00</div>
<div style="font-size:6.8px;line-height:7px;white-space:nowrap;position:absolute;right:419.6px;top:96.0px;color:#2ec82e;">V</div>
<div style="font-size:6.8px;line-height:7px;white-space:nowrap;position:absolute;right:419.6px;top:360.5px;color:#d01818;">dBu</div>
<div style="font-size:6.8px;line-height:7px;white-space:nowrap;position:absolute;left:226.5px;top:359.7px;color:#d01818;">0.00 Hz</div>
<div style="font-size:6.8px;line-height:7px;white-space:nowrap;position:absolute;left:226.5px;top:367.6px;color:#2ec82e;">0.00 ms</div>
<div style="font-size:6.8px;line-height:7px;white-space:nowrap;position:absolute;left:271.85px;width:60px;text-align:center;top:359.7px;color:#d01818;">4824.12</div>
<div style="font-size:6.8px;line-height:7px;white-space:nowrap;position:absolute;left:271.85px;width:60px;text-align:center;top:367.6px;color:#2ec82e;">0.40</div>
<div style="font-size:6.8px;line-height:7px;white-space:nowrap;position:absolute;left:347.2px;width:60px;text-align:center;top:359.7px;color:#d01818;">9648.24</div>
<div style="font-size:6.8px;line-height:7px;white-space:nowrap;position:absolute;left:347.2px;width:60px;text-align:center;top:367.6px;color:#2ec82e;">0.80</div>
<div style="font-size:6.8px;line-height:7px;white-space:nowrap;position:absolute;left:422.54999999999995px;width:60px;text-align:center;top:359.7px;color:#d01818;">14472.36</div>
<div style="font-size:6.8px;line-height:7px;white-space:nowrap;position:absolute;left:422.54999999999995px;width:60px;text-align:center;top:367.6px;color:#2ec82e;">1.20</div>
<div style="font-size:6.8px;line-height:7px;white-space:nowrap;position:absolute;left:497.9px;width:60px;text-align:center;top:359.7px;color:#d01818;">19296.48</div>
<div style="font-size:6.8px;line-height:7px;white-space:nowrap;position:absolute;left:497.9px;width:60px;text-align:center;top:367.6px;color:#2ec82e;">1.60</div>
<div style="font-size:6.8px;line-height:7px;white-space:nowrap;position:absolute;right:36.5px;top:359.7px;color:#d01818;">24000.00</div>
<div style="font-size:6.8px;line-height:7px;white-space:nowrap;position:absolute;right:36.5px;top:367.6px;color:#2ec82e;">1.99</div>
<div style="position:absolute;left:226px;top:378.5px;width:377.2px;height:3.4px;background:#8c8c8c;"></div>
<div style="position:absolute;left:226px;top:378.5px;width:17.7px;height:3.4px;background:#38d038;"></div>
<div style="position:absolute;left:188px;top:112px;width:4.2px;height:239px;background:linear-gradient(90deg,#6e6e6e,#a8a8a8 50%,#707070);"></div>
<div style="position:absolute;left:188.4px;top:226.1px;width:3.6px;height:11.3px;background:#3ad83a;"></div>
<svg style="position:absolute;left:0;top:0" width="640" height="60" viewBox="0 0 640 60"><path d="M8.3 34 L10.5 33 L12 33.8 L15 33.8 L15 35 L17 35 L15.3 38.8 L8.3 38.8 Z" fill="#d4cc50" stroke="#4a4418" stroke-width="0.9"/><path d="M14 32.2 Q16 31.8 16.5 33.6" stroke="#222" stroke-width="0.8" fill="none"/><path d="M21.6 35.4 L25.8 35.4 L23.7 37.6 Z" fill="#111"/><rect x="30.4" y="32.4" width="7.4" height="7.2" fill="#2a2a14" stroke="#1a1a0a" stroke-width="0.6"/><rect x="32" y="32.8" width="4.2" height="2.8" fill="#d8d8d0"/><rect x="32.3" y="37.4" width="3.6" height="1.8" fill="#f0f0f0"/><rect x="43.4" y="32.4" width="7.6" height="7.2" fill="#d8d020" stroke="#1e1e08" stroke-width="1"/><rect x="45" y="32.6" width="4.5" height="2.2" fill="#262610"/><line x1="56" y1="30" x2="56" y2="42" stroke="#c4c4c4" stroke-width="1"/><rect x="59.9" y="32.1" width="8" height="4.5" fill="#1a7a88" stroke="#102830" stroke-width="0.9"/><line x1="61.4" y1="34.3" x2="66.4" y2="34.3" stroke="#9fe" stroke-width="0.6"/><path d="M60.4 37.4 h1.8 v2.5 h-1.8 Z M63.0 37.2 v2.7 h1.7 v-2.7 M65.4 37.3 h2.2 M66.5 37.3 v2.7" stroke="#3848c0" stroke-width="0.85" fill="none"/><path d="M72.5 32.8 L76.0 34.4 L72.5 36.0 M81.0 32.8 L77.5 34.4 L81.0 36.0 M75.5 34.4 H78.0" stroke="#303848" stroke-width="0.9" fill="none"/><path d="M73.5 37.4 h1.8 v2.5 h-1.8 Z M76.1 37.2 v2.7 h1.7 v-2.7 M78.5 37.3 h2.2 M79.6 37.3 v2.7" stroke="#3848c0" stroke-width="0.85" fill="none"/><path d="M85.10000000000001 36.8 A3.9 3.9 0 0 1 92.7 36.8 Z" fill="#f4f4fa" stroke="#404a78" stroke-width="0.9"/><line x1="88.9" y1="36.4" x2="91.2" y2="33.6" stroke="#d02020" stroke-width="0.8"/><path d="M85.4 37.4 h1.8 v2.5 h-1.8 Z M88.0 37.2 v2.7 h1.7 v-2.7 M90.4 37.3 h2.2 M91.5 37.3 v2.7" stroke="#3848c0" stroke-width="0.85" fill="none"/><ellipse cx="101.4" cy="34.4" rx="4" ry="2.6" fill="#4a9a30" stroke="#2a4a18" stroke-width="0.8"/><rect x="101.4" y="32.8" width="3" height="2.2" fill="#d8d040"/><path d="M97.9 37.4 h1.8 v2.5 h-1.8 Z M100.5 37.2 v2.7 h1.7 v-2.7 M102.9 37.3 h2.2 M104.0 37.3 v2.7" stroke="#3848c0" stroke-width="0.85" fill="none"/><line x1="109.4" y1="30" x2="109.4" y2="42" stroke="#c4c4c4" stroke-width="1"/><rect x="114.3" y="32.1" width="8" height="4.5" fill="#302028" stroke="#102830" stroke-width="0.9"/><line x1="115.8" y1="34.3" x2="120.8" y2="34.3" stroke="#9fe" stroke-width="0.6"/><path d="M114.8 37.4 h1.8 v2.5 h-1.8 Z M117.39999999999999 37.2 v2.7 h1.7 v-2.7 M119.8 37.3 h2.2 M120.89999999999999 37.3 v2.7" stroke="#c02030" stroke-width="0.85" fill="none"/><path d="M114.8 32.3 L121.8 39.3 M121.8 32.3 L114.8 39.3" stroke="#e02020" stroke-width="1.3"/><rect x="125" y="29.5" width="11.5" height="13.0" fill="#e2e4e8" stroke="#b8bcc4" stroke-width="0.8"/><path d="M127.7 36.8 A3.9 3.9 0 0 1 135.3 36.8 Z" fill="#f4f4fa" stroke="#606060" stroke-width="0.9"/><line x1="131.5" y1="36.4" x2="133.8" y2="33.6" stroke="#d02020" stroke-width="0.8"/><path d="M128 37.4 h1.8 v2.5 h-1.8 Z M130.6 37.2 v2.7 h1.7 v-2.7 M133 37.3 h2.2 M134.1 37.3 v2.7" stroke="#c02030" stroke-width="0.85" fill="none"/><path d="M128 32.3 L135 39.3 M135 32.3 L128 39.3" stroke="#e02020" stroke-width="1.3"/><ellipse cx="143.9" cy="34.4" rx="4" ry="2.6" fill="#4a9a30" stroke="#2a4a18" stroke-width="0.8"/><rect x="143.9" y="32.8" width="3" height="2.2" fill="#d8d040"/><path d="M140.4 37.4 h1.8 v2.5 h-1.8 Z M143.0 37.2 v2.7 h1.7 v-2.7 M145.4 37.3 h2.2 M146.5 37.3 v2.7" stroke="#c02030" stroke-width="0.85" fill="none"/><path d="M140.4 32.3 L147.4 39.3 M147.4 32.3 L140.4 39.3" stroke="#e02020" stroke-width="1.3"/><line x1="152" y1="30" x2="152" y2="42" stroke="#c4c4c4" stroke-width="1"/><rect x="156.1" y="32.1" width="8" height="4.5" fill="#1a7a88" stroke="#102830" stroke-width="0.9"/><line x1="157.6" y1="34.3" x2="162.6" y2="34.3" stroke="#9fe" stroke-width="0.6"/><path d="M158.6 37.2 v2.8 M160.2 40.0 v-2.8 L162.2 40.0 v-2.8" stroke="#3848c0" stroke-width="0.9" fill="none"/><path d="M168.8 32.8 L172.3 34.4 L168.8 36.0 M177.3 32.8 L173.8 34.4 L177.3 36.0 M171.8 34.4 H174.3" stroke="#303848" stroke-width="0.9" fill="none"/><path d="M171.8 37.2 v2.8 M173.4 40.0 v-2.8 L175.4 40.0 v-2.8" stroke="#3848c0" stroke-width="0.9" fill="none"/><path d="M182.0 36.8 A3.9 3.9 0 0 1 189.60000000000002 36.8 Z" fill="#f4f4fa" stroke="#404a78" stroke-width="0.9"/><line x1="185.8" y1="36.4" x2="188.10000000000002" y2="33.6" stroke="#d02020" stroke-width="0.8"/><path d="M184.3 37.2 v2.8 M185.9 40.0 v-2.8 L187.9 40.0 v-2.8" stroke="#3848c0" stroke-width="0.9" fill="none"/><ellipse cx="197.5" cy="34.4" rx="4" ry="2.6" fill="#4a9a30" stroke="#2a4a18" stroke-width="0.8"/><rect x="197.5" y="32.8" width="3" height="2.2" fill="#d8d040"/><path d="M196 37.2 v2.8 M197.6 40.0 v-2.8 L199.6 40.0 v-2.8" stroke="#3848c0" stroke-width="0.9" fill="none"/><line x1="206.3" y1="30" x2="206.3" y2="42" stroke="#c4c4c4" stroke-width="1"/><rect x="208" y="29.5" width="12.599999999999994" height="13.0" fill="#e2e4e8" stroke="#b8bcc4" stroke-width="0.8"/><path d="M212 33 L218 39 M218 33 L212 39" stroke="#d82020" stroke-width="1.5"/><path d="M212.5 36 H217.5" stroke="#a02020" stroke-width="1"/><line x1="223.8" y1="30" x2="223.8" y2="42" stroke="#c4c4c4" stroke-width="1"/><path d="M226.5 38 L236 38" stroke="#111" stroke-width="1.5"/><path d="M227 37 Q229 30 231 36 Q233 30 235.5 37" stroke="#3040c8" stroke-width="1.2" fill="none"/><path d="M238.5 37 Q240.5 30 243 36 Q245 30 248 37" stroke="#8040a0" stroke-width="1.2" fill="none"/><path d="M240 32.3 L247 39.3 M247 32.3 L240 39.3" stroke="#e02020" stroke-width="1.3"/><path d="M252 37 Q254 31 256 36 Q258 31 261 37 M252 38.5 H261" stroke="#b8b8b8" stroke-width="1.1" fill="none"/><line x1="265" y1="30" x2="265" y2="42" stroke="#c4c4c4" stroke-width="1"/><rect x="269" y="32.2" width="8.8" height="4.8" fill="#1a8a88" stroke="#0a2a30" stroke-width="0.9"/><path d="M270 38.3 h2 M274 38.3 h2.5" stroke="#111" stroke-width="1.6"/><rect x="280" y="29.5" width="12" height="13.0" fill="#e2e4e8" stroke="#b8bcc4" stroke-width="0.8"/><path d="M282.3 37 A3.9 3.9 0 0 1 290 37 Z" fill="#fff" stroke="#303848" stroke-width="1"/><path d="M284 36 L288 33.5" stroke="#d02030" stroke-width="0.9"/><path d="M283 38.6 h2 M286.5 38.6 h2" stroke="#111" stroke-width="1.4"/><path d="M294 37 A4 4 0 0 1 302.2 37 Z" fill="#e8e8e8" stroke="#b0b0b0" stroke-width="1"/><path d="M295 38.6 h2 M298.5 38.6 h2" stroke="#c0c0c0" stroke-width="1.4"/><line x1="307" y1="30" x2="307" y2="42" stroke="#c4c4c4" stroke-width="1"/><rect x="309.2" y="29.5" width="11.800000000000011" height="13.0" fill="#e2e4e8" stroke="#b8bcc4" stroke-width="0.8"/><text x="311.3" y="36.0" font-family="Liberation Sans" font-weight="bold" font-size="4.6" fill="#222">·</text><text x="311.3" y="40.4" font-family="Liberation Sans" font-weight="bold" font-size="4.6" fill="#333">C</text><text x="315.6" y="36.0" font-family="Liberation Sans" font-weight="bold" font-size="5" fill="#000" stroke="#000" stroke-width="0.35">A</text><text x="315.6" y="40.6" font-family="Liberation Sans" font-weight="bold" font-size="5" fill="#000" stroke="#000" stroke-width="0.35">B</text><text x="324.0" y="36.0" font-family="Liberation Sans" font-weight="bold" font-size="4.6" fill="#222">C</text><text x="324.0" y="40.4" font-family="Liberation Sans" font-weight="bold" font-size="4.6" fill="#333">A</text><text x="328.3" y="36.0" font-family="Liberation Sans" font-weight="bold" font-size="5" fill="#000" stroke="#000" stroke-width="0.35">A</text><text x="328.3" y="40.6" font-family="Liberation Sans" font-weight="bold" font-size="5" fill="#000" stroke="#000" stroke-width="0.35">B</text><text x="336.7" y="36.0" font-family="Liberation Sans" font-weight="bold" font-size="4.6" fill="#222">B</text><text x="336.7" y="40.4" font-family="Liberation Sans" font-weight="bold" font-size="4.6" fill="#333">A</text><text x="341.0" y="36.0" font-family="Liberation Sans" font-weight="bold" font-size="5" fill="#000" stroke="#000" stroke-width="0.35">A</text><text x="341.0" y="40.6" font-family="Liberation Sans" font-weight="bold" font-size="5" fill="#000" stroke="#000" stroke-width="0.35">B</text><line x1="348.8" y1="30" x2="348.8" y2="42" stroke="#c4c4c4" stroke-width="1"/><rect x="351.3" y="29.5" width="11.699999999999989" height="13.0" fill="#e2e4e8" stroke="#b8bcc4" stroke-width="0.8"/><circle cx="357.8" cy="36" r="3.6" fill="#28d028" stroke="#146814" stroke-width="0.9"/><circle cx="369.7" cy="36" r="3.6" fill="#e82020" stroke="#781010" stroke-width="0.9"/><path d="M378.0 38.3 Q379.7 34.3 382.0 36.8 T386.4 35.8" stroke="#2a9a2a" stroke-width="1.4" fill="none"/><path d="M381 32.5 L385 34.5 M383 32.2 L386 33.6" stroke="#3040c8" stroke-width="0.9"/><path d="M390.5 39 H399.5 M391 39 L391 36 L394 36 L396 33" stroke="#8a1818" stroke-width="1.6" fill="none"/><path d="M395 32.5 L399 34.5" stroke="#3040c8" stroke-width="0.9"/><line x1="403" y1="30" x2="403" y2="42" stroke="#c4c4c4" stroke-width="1"/><path d="M407.5 36.8 Q409.2 32.8 411.5 35.3 T415.7 34.3" stroke="#185a6a" stroke-width="1.4" fill="none"/><rect x="408.3" y="37.8" width="3" height="2" fill="#1a6a70"/><rect x="412.3" y="37.8" width="3" height="2" fill="#8a6a70"/><path d="M419.9 36.8 Q421.59999999999997 32.8 423.9 35.3 T427.59999999999997 34.3" stroke="#30a030" stroke-width="1.4" fill="none"/><rect x="420.40000000000003" y="37.8" width="3" height="2" fill="#1a6a70"/><rect x="424.40000000000003" y="37.8" width="3" height="2" fill="#8a6a70"/><path d="M432 35.5 H441 M436.5 32 V35.5" stroke="#8a1818" stroke-width="1.6"/><rect x="433.3" y="37.8" width="3" height="2" fill="#1a6a70"/><rect x="437.3" y="37.8" width="3" height="2" fill="#8a6a70"/><path d="M445 35 H454 M449 32 V36" stroke="#30a030" stroke-width="1.3"/><rect x="446.0" y="37.8" width="3" height="2" fill="#1a6a70"/><rect x="450.0" y="37.8" width="3" height="2" fill="#8a6a70"/><path d="M458 36 H463 M462 32.5 L466 38.5" stroke="#30a030" stroke-width="1.3"/><path d="M463 33 L466.5 34.5" stroke="#d02020" stroke-width="1"/><circle cx="465" cy="39" r="1" fill="#d02020"/><rect x="470.3" y="32" width="9" height="8" fill="#0a5a30" stroke="#0a2a18" stroke-width="0.8"/><path d="M471.5 38 L473 34 L475 37 L477 33.5 L478.5 36" stroke="#5de05d" stroke-width="0.8" fill="none"/><line x1="482.5" y1="30" x2="482.5" y2="42" stroke="#c4c4c4" stroke-width="1"/><path d="M487.5 39.5 Q488 32 494 33" stroke="#6a5a10" stroke-width="1.5" fill="none"/><path d="M490.5 34 L496 36.5 L490.5 39.2 Z" fill="#28c028"/><path d="M499.5 39.5 Q500 32 506 33" stroke="#b0b0b0" stroke-width="1.3" fill="none"/><circle cx="505" cy="37" r="1.6" fill="#a8a8a8"/><path d="M512.5 39.5 Q513 32 520 32.5" stroke="#6a5a10" stroke-width="1.5" fill="none"/><rect x="514.3" y="35" width="5" height="4.5" fill="#7050a0"/><path d="M516 38 L521 33" stroke="#4a3a10" stroke-width="1"/><line x1="525" y1="30" x2="525" y2="42" stroke="#c4c4c4" stroke-width="1"/><path d="M529 32 H535 L537.5 34.5 V40 H529 Z" fill="#e8e8e8" stroke="#404040" stroke-width="0.8"/><path d="M532 35 L537 37.5 L532 40 Z" fill="#18b818"/><path d="M541.9 35.3 L546.9 35.3 L544.4 37.8 Z" fill="#111"/><path d="M551.5 32 H556.5 L558.5 34 V40 H551.5 Z" fill="#f0f0f0" stroke="#b8b8b8" stroke-width="0.8"/><circle cx="557" cy="38" r="2" fill="#f4f4f4" stroke="#a8a8a8" stroke-width="0.8"/></svg>
<svg style="position:absolute;left:3px;top:5px" width="10" height="7" viewBox="0 0 10 7"><path d="M1 6.5 L4.2 0.6 L9 6.5 Z" fill="#fff" stroke="#2a2040" stroke-width="1"/><path d="M4.5 3 L9 6.3" stroke="#b02090" stroke-width="1.4"/></svg>
</body></html>
